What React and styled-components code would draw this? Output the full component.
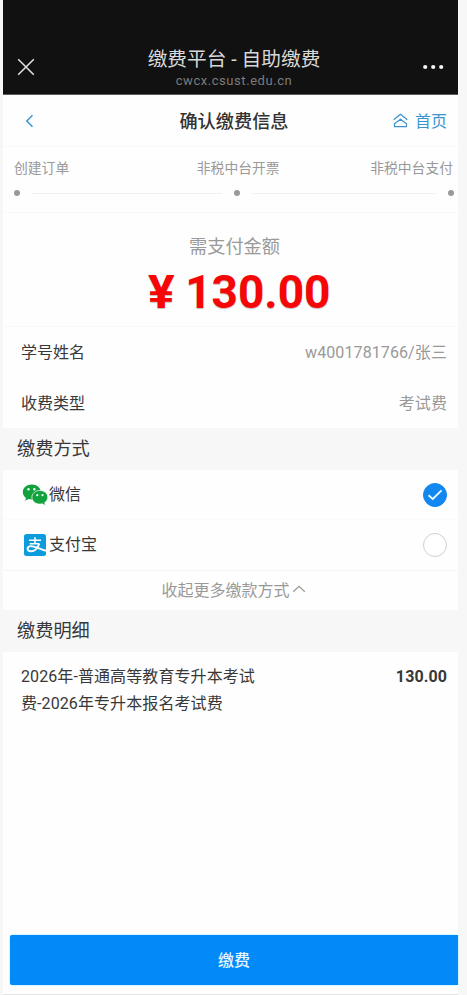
import React from 'react';
import styled, { createGlobalStyle } from 'styled-components';


const GlobalStyle = createGlobalStyle`

    * {
        box-sizing: border-box;
    }

    body {
        margin:         0;
        background:     #f7f7f7;
        color:          #383838;
        font-family:    Roboto, "Noto Sans CJK SC", sans-serif;
        font-size:      16px;
        overflow:       hidden;
    }

`;


const Page = styled.div`

    display:        flex;
    flex-direction: column;
    width:          467px;
    height:         995px;
    padding:        0 9px 0 3px;
    background:     #f7f7f7;

`;


const Screen = styled.main`

    display:        flex;
    flex:           1;
    flex-direction: column;
    background:     #fefefe;
    border-bottom:  1px solid #e3e3e3;

`;


const TitleBar = styled.header`

    display:                grid;
    grid-template-columns:  60px 1fr 60px;
    height:                 95px;
    padding:                46px 13px 0 14px;
    background:             #111111;
    border-bottom:          1px solid #5a5a5a;
    color:                  #d8d8d8;

    svg {
        margin-top: 12px;
    }

    svg:last-child {
        justify-self: end;
    }

`;


const TitleText = styled.div`

    display:        flex;
    flex-direction: column;
    align-items:    center;
    padding-left:   6px;
    white-space:    nowrap;

`;


const Title = styled.h1`

    margin:         0;
    font-size:      19.7px;
    font-weight:    400;
    line-height:    27px;

`;


const Host = styled.span`

    color:          #7c7c7c;
    font-size:      13px;
    line-height:    16px;
    letter-spacing: .55px;

`;


const NavBar = styled.nav`

    display:                grid;
    grid-template-columns:  77px 1fr 80px;
    align-items:            center;
    height:                 52px;
    padding:                0 11px 2px 21px;
    border-bottom:          1px solid #f8f8f8;
    color:                  #3d93cf;

    svg {
        margin-top: 2px;
    }

`;


const NavTitle = styled.h2`

    margin:         0;
    color:          #333;
    font-size:      18.2px;
    font-weight:    500;
    text-align:     center;

`;


const HomeLink = styled.a`

    display:            flex;
    align-items:        center;
    justify-content:    flex-end;
    gap:                7px;
    white-space:        nowrap;

`;


const Steps = styled.section`

    height:         66px;
    padding:        10px 4px 0 11px;
    border-bottom:  1px solid #f8f8f8;
    color:          #999;
    font-size:      13.8px;

`;


const StepLabels = styled.div`

    display:            flex;
    justify-content:    space-between;
    padding-right:      1px;
    line-height:        22px;

    span:nth-child(2) {
        margin-left: 37px;
    }

`;


const StepTrack = styled.div`

    display:        flex;
    align-items:    center;
    height:         6px;
    margin-top:     11px;

`;


const StepDot = styled.i`

    width:          6px;
    height:         6px;
    border-radius:  50%;
    background:     #999;

`;


const StepLine = styled.i`

    flex:       ${ props => props.$grow };
    height:     1px;
    margin:     0 12px;
    background: #f1f1f1;

`;


const AmountBlock = styled.section`

    display:        flex;
    flex-direction: column;
    align-items:    center;
    height:         114px;
    padding:        21px 0 0 8px;
    border-bottom:  1px solid #f8f8f8;

`;


const AmountLabel = styled.span`

    color:          #999;
    font-size:      18.2px;
    line-height:    26px;

`;


const Amount = styled.strong`

    display:        flex;
    gap:            11px;
    margin:         4px 0 0 11px;
    color:          #f60606;
    font-size:      46px;
    font-weight:    700;
    line-height:    56px;
    text-shadow:    0 1px 1px rgba( 80, 60, 60, .35 );

`;


const YuanSign = styled.span`

    transform:          scaleX( 1.08 );
    transform-origin:   right;

`;


const Row = styled.div`

    display:            flex;
    align-items:        center;
    justify-content:    space-between;
    height:             ${ props => props.$height || 50 }px;
    padding:            0 11px 2px 18px;

`;


const RowValue = styled.span`

    color:          #999;
    letter-spacing: .1px;

`;


const SectionTitle = styled.h3`

    height:         42px;
    margin:         0;
    padding-left:   14px;
    background:     #f7f7f7;
    font-size:      18.2px;
    font-weight:    400;
    line-height:    41px;

`;


const Method = styled( Row )`

    padding:        0 11px 0 19px;
    border-bottom:  1px solid ${ props => props.$last ? '#f5f5f5' : '#fafafa' };

`;


const MethodName = styled.span`

    display:        flex;
    align-items:    center;
    line-height:    22px;

    svg {
        width: 27px;
    }

`;


const Radio = styled.span`

    display:            flex;
    align-items:        center;
    justify-content:    center;
    width:              24px;
    height:             24px;
    border:             1px solid ${ props => props.$checked ? '#1187ef' : '#cfcfcf' };
    border-radius:      50%;
    background:         ${ props => props.$checked ? '#1187ef' : '#fff' };

`;


const Toggle = styled.div`

    display:            flex;
    align-items:        center;
    justify-content:    center;
    gap:                2px;
    height:             39px;
    padding:            0 0 3px 6px;
    color:              #999;

`;


const Detail = styled.div`

    display:            flex;
    align-items:        flex-start;
    justify-content:    space-between;
    padding:            11px 11px 0 18px;
    line-height:        27px;

`;


const DetailName = styled.span`

    width:          240px;
    letter-spacing: .09px;

`;


const DetailPrice = styled.strong`

    font-weight:    700;
    letter-spacing: .1px;

`;


const PayButton = styled.button`

    height:         50px;
    margin:         auto 0 9px 7px;
    padding:        0 0 2px;
    border:         0;
    border-radius:  2px 0 0 2px;
    background:     #028af9;
    box-shadow:     0 0 2px #7fe0ff;
    color:          #e6f6ff;
    font-family:    inherit;
    font-size:      16px;
    font-weight:    500;

`;


function CloseIcon()
{
    return (
        <svg width="18" height="18" viewBox="0 0 18 18" fill="none" stroke="#e4e4e4" strokeWidth="1.5">
            <path d="M1.2 1.2 16.8 16.8M16.8 1.2 1.2 16.8" />
        </svg>
    );
}


function MoreIcon()
{
    return (
        <svg width="22" height="18" viewBox="0 0 22 18" fill="#f4f4f4">
            <circle cx="2.2" cy="9" r="2.1" />
            <circle cx="10.2" cy="9" r="2.1" />
            <circle cx="18.2" cy="9" r="2.1" />
        </svg>
    );
}


function BackIcon()
{
    return (
        <svg width="11" height="14" viewBox="0 0 11 14" fill="none" stroke="currentColor" strokeWidth="1.5">
            <path d="M8.5 1.2 2.8 7l5.7 5.8" />
        </svg>
    );
}


function HomeIcon()
{
    return (
        <svg width="15" height="15" viewBox="0 0 15 15" fill="none" stroke="currentColor" strokeWidth="1.2" strokeLinejoin="round">
            <path d="M.7 6.8 7.5 1.2l6.8 5.6" />
            <path d="M1.5 13.7v-2.9l6-4.6 6 4.6v2.9z" />
        </svg>
    );
}


function WechatIcon()
{
    return (
        <svg width="27" height="22" viewBox="0 0 27 22">
            <path fill="#12a23d" d="M9.8.5C4.700.5.8 3.800.8 8c0 2.400 1.200 4.400 3.100 5.800L3.200 16.800l3.500-1.800c1 .3 2 .5 3.100.5 5.100 0 9-3.300 9-7.500S14.900.5 9.800.5z" />
            <path fill="#12a23d" stroke="#fefefe" strokeWidth=".7" d="M17.900 6.500c-4.500 0-8 3-8 6.800s3.500 6.800 8 6.800c.8 0 1.700-.1 2.400-.3l3.100 1.800-.7-3c1.900-1.200 3.100-3.100 3.100-5.300 0-3.800-3.500-6.800-7.900-6.800z" />
            <g fill="#f4fff5">
                <circle cx="6.500" cy="5.300" r="1.200" />
                <circle cx="12.300" cy="5.300" r="1.200" />
                <circle cx="15.300" cy="11.200" r="1.100" />
                <circle cx="20.500" cy="11.200" r="1.100" />
            </g>
        </svg>
    );
}


function AlipayIcon()
{
    return (
        <svg width="27" height="22" viewBox="0 0 27 22">
            <rect x="2" width="22" height="22" rx="2.500" fill="#0c9bdb" />
            <g fill="none" stroke="#fff">
                <path strokeWidth="1.600" d="M7 6.200h12M13 3.200v6.500M7.800 9.800h9.600" />
                <path strokeWidth="1.900" d="M17.200 9.800c-1.400 4.300-4.700 7.500-8.300 7.500-2 0-3.300-1-3.300-2.500 0-1.700 1.500-2.700 3.400-2.700 3.800 0 8 3 15 4.600" />
            </g>
        </svg>
    );
}


function CheckIcon()
{
    return (
        <svg width="16" height="12" viewBox="0 0 16 12" fill="none" stroke="#e5fbff" strokeWidth="1.9">
            <path d="M1.500 6.200 5.800 10l8.700-8.600" />
        </svg>
    );
}


function CollapseIcon()
{
    return (
        <svg width="14" height="8" viewBox="0 0 14 8" fill="none" stroke="#999" strokeWidth="1.200">
            <path d="M1.200 6.800 7 1.300l5.800 5.500" />
        </svg>
    );
}


export default function App()
{
    return (

        <Page>
            <GlobalStyle />
            <Screen>

                <TitleBar>
                    <CloseIcon />
                    <TitleText>
                        <Title>缴费平台 - 自助缴费</Title>
                        <Host>cwcx.csust.edu.cn</Host>
                    </TitleText>
                    <MoreIcon />
                </TitleBar>

                <NavBar>
                    <BackIcon />
                    <NavTitle>确认缴费信息</NavTitle>
                    <HomeLink>
                        <HomeIcon />
                        首页
                    </HomeLink>
                </NavBar>

                <Steps>
                    <StepLabels>
                        <span>创建订单</span>
                        <span>非税中台开票</span>
                        <span>非税中台支付</span>
                    </StepLabels>
                    <StepTrack>
                        <StepDot />
                        <StepLine $grow={ 194 } />
                        <StepDot />
                        <StepLine $grow={ 187 } />
                        <StepDot />
                    </StepTrack>
                </Steps>

                <AmountBlock>
                    <AmountLabel>需支付金额</AmountLabel>
                    <Amount>
                        <YuanSign>¥</YuanSign>
                        <span>130.00</span>
                    </Amount>
                </AmountBlock>

                <Row>
                    <span>学号姓名</span>
                    <RowValue>w4001781766/张三</RowValue>
                </Row>
                <Row $height={ 51 }>
                    <span>收费类型</span>
                    <RowValue>考试费</RowValue>
                </Row>

                <SectionTitle>缴费方式</SectionTitle>
                <Method>
                    <MethodName><WechatIcon />微信</MethodName>
                    <Radio $checked><CheckIcon /></Radio>
                </Method>
                <Method $height={ 51 } $last>
                    <MethodName><AlipayIcon />支付宝</MethodName>
                    <Radio />
                </Method>
                <Toggle>
                    收起更多缴款方式
                    <CollapseIcon />
                </Toggle>

                <SectionTitle>缴费明细</SectionTitle>
                <Detail>
                    <DetailName>2026年-普通高等教育专升本考试费-2026年专升本报名考试费</DetailName>
                    <DetailPrice>130.00</DetailPrice>
                </Detail>

                <PayButton>缴费</PayButton>

            </Screen>
        </Page>

    );
}
